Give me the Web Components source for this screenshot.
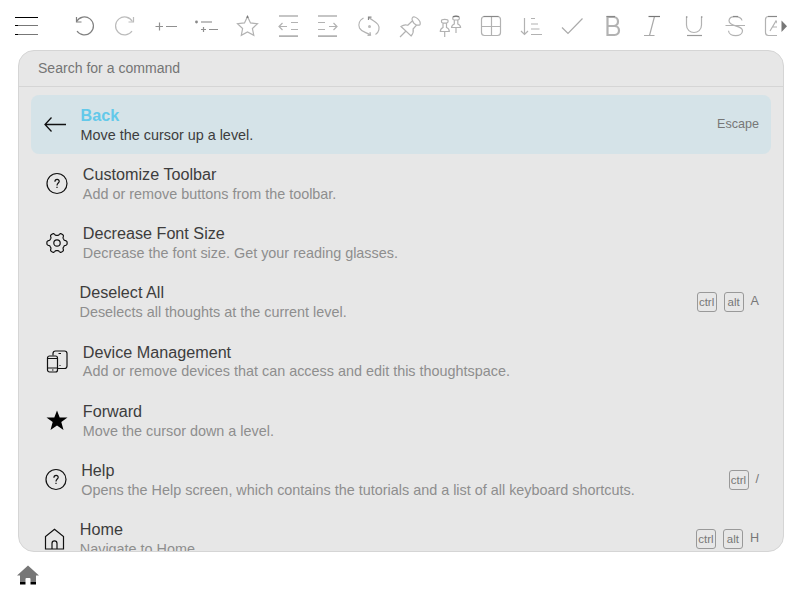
<!DOCTYPE html>
<html lang="en">
<head>
<meta charset="utf-8">
<title>Commands</title>
<style>
html,body{margin:0;height:100%;overflow:hidden;background:#fff}
body{font-family:"Liberation Sans",Arial,sans-serif}
</style>
</head>
<body>
<app-shell></app-shell>
<script>
const define = (name, html) => customElements.define(name, class extends HTMLElement {
  connectedCallback() {
    if (this.shadowRoot) return;
    const t = document.createElement('template');
    t.innerHTML = typeof html === 'function' ? html(this) : html;
    this.attachShadow({ mode: 'open' }).append(t.content.cloneNode(true));
  }
});

const toolIcons = {
  undo: '<g stroke="#808080"><path d="M12.6 15.5A9 9 0 1 1 13 25"/><path d="M12.500 11v5h5"/></g>',
  redo: '<g stroke="#bbb"><path d="M27.400 15.500A9 9 0 1 0 27 25"/><path d="M28.500 11v5h-5"/></g>',
  add: '<g stroke="#909090"><path d="M14.500 16.500v8M10.500 20.500h7.500M21 20.500h11"/></g>',
  sub: '<g stroke="#909090"><path stroke="#aaa" stroke-width="1.500" d="M15 16h11"/><path d="M17.500 21v5M15 23.500h5M23 23.500h9"/></g><circle cx="10.500" cy="16" r="1.400" fill="#888" stroke="none"/>',
  star: '<path d="M20.500 10.500l3 6.400 7 .8-5.100 4.800 1.400 6.800-6.300-3.300-6.200 3.300 1.300-6.800-5.100-4.800 7-.8z"/><path stroke="#777" d="M19.700 11.700l.8-1.300.8 1.300"/>',
  outdent: '<path stroke-width="1.700" d="M11 10h19M11 30.200h19"/><path d="M11 20.500h8M14.500 17l-3.500 3.500 3.500 3.500M23 16.500h7M23 23.500h7"/>',
  indent: '<path stroke-width="1.700" d="M11 10h19M11 30.200h19"/><path d="M30 20.500h-8M26.500 17l3.500 3.500-3.500 3.500M11 16.500h7M11 23.500h7"/>',
  swap: '<path d="M14.500 12c-4 2-5.500 6-4 10 2 4 6 4 11 7M18.500 29.300l3-.2-.5-3M26.500 28.500c3.500-2 4.600-7 2.500-10-2-3-5-3.500-9.500-7.200"/><path stroke="#888" d="M19.500 14v-2.800h3"/><circle cx="20.500" cy="20.400" r="1.500" fill="#bbb" stroke="none"/>',
  pin: '<path d="M22.500 11.500c2-2.500 9 3 7.500 7.200-1.500 1-2.500.3-3.500.3l-3.400 4c.6 2.700-.2 5-2 7L11 20.500c2-1.500 4.500-2 6.800-1.300l4.700-4.500c-.8-.9-.8-2 0-3.200zM22.500 14.700c.6 2 2 3.700 4 4.300M15.500 25.500L10 31"/>',
  pins: '<path d="M11.500 14.500c0-1.500 6.500-1.500 6.500 0v1.500c-.5.800-1 .8-1.500 1v4.500c2 .8 2.800 2 2.800 4h-9c0-2 1-3.200 2.700-4V17c-1-.2-1.500-.5-1.500-1zM13 17.200h3.500M14.700 25.500V31"/><path d="M22.800 11.500c0-1.500 6.500-1.500 6.500 0V13c-.5.800-1 .8-1.500 1v4c2 .8 2.800 1.700 2.800 3.500h-9c0-1.800 1-2.800 2.700-3.500v-4c-1-.2-1.500-.5-1.500-1zM24.300 14h3.500M26 21.500V27"/><path stroke="#777" d="M23 10.700c1-.8 5-.8 6 0"/>',
  table: '<rect x="10.500" y="10.500" width="19" height="19" rx="3"/><path d="M20.500 10.500v19M10.500 20.500h19"/><path stroke="#888" d="M12.500 10.500h15"/>',
  sort: '<path d="M13.500 12v16.500M10 25l3.500 3.500 3.500-3.500M20 12.500h4M20 18h7M20 23h8.500M20 28.500h11"/>',
  check: '<path stroke="#aaa" d="M10 21.500l6 6 14.500-15"/>',
  bold: '<path stroke-width="2.200" d="M14.500 11h6c6 0 6 9 0 9h-6zM14.500 20h7c6 0 6 9 0 9h-7z"/><path stroke="#888" d="M13.500 10.500H22"/>',
  italic: '<path stroke="#aaa" d="M12 29.500h10.500M22.500 10.500l-5 19"/><path stroke="#777" d="M16.500 10.500h11.500"/>',
  underline: '<path d="M12.500 10.500v8.500c0 10 15 10 15 0v-8.500"/><path stroke="#999" d="M13 29.500h15"/><path stroke="#888" d="M12 11h1.500M27 11h1.500"/>',
  strike: '<path d="M27 14.500c-1-5-12.500-5.500-13 0 0 3 2.500 4.300 6.500 5.300 4 1 7 2 7 5 0 6.500-13.500 6.500-14 0M10.500 19.500H30"/><path stroke="#888" d="M18 10.500h5"/>',
  color: '<rect x="9.500" y="10.500" width="20" height="19" rx="3"/><path d="M14 25l6-10 6 10M16.500 21h7"/><path stroke="#888" d="M12 10.500h16"/>'
};

define('tool-icon', el => `<style>
:host{display:block;width:40px;height:40px}svg{display:block;fill:none;stroke:#b2b2b2;stroke-width:1.200}
</style><svg width="40" height="40">${toolIcons[el.getAttribute('name')]}</svg>`);

define('menu-button', `<style>:host{display:block;width:64px;height:40px}svg{display:block}</style>
<svg width="64" height="40"><path d="M15 11h23v1H15zM15 19h3v1h-3zM15 28h3v1h-3z"/><path fill="#777" d="M18 19h20v1H18zM18 28h20v1H18z"/></svg>`);

define('tool-bar', `<style>
:host{display:flex;height:50px;padding-top:6px;box-sizing:border-box}
.tools{display:grid;flex:0 0 713px;width:713px;overflow:hidden;grid-template-columns:41px 40px 41px 41px 41px 39px 42px 41px 40px 41px 40px 41px 41px 39px 42px 41px 41px 41px}
.more{width:10px;height:40px;margin-left:4px}
</style><menu-button></menu-button><div class="tools">
${['undo','redo','add','sub','star','outdent','indent','swap','pin','pins','table','sort','check','bold','italic','underline','strike','color'].map(n => `<tool-icon name="${n}"></tool-icon>`).join('')}
</div><svg class="more"><path fill="#777" d="M.5 14.500l5.500 5.700L.5 26z"/></svg>`);

const help = '<circle cx="11" cy="11.500" r="10"/><path d="M8.900 9.800c0-3.300 4.600-3 4.300-.3-.2 1.600-2.200 1.700-2.200 4M11 14.700v1.200"/>';
const gear = (() => {
  let d = '';
  for (let i = 0; i <= 144; i++) {
    const a = i / 144 * Math.PI * 2;
    const r = 8.900 + 1.250 * Math.tanh(2.200 * Math.cos(6 * a));
    d += (i ? 'L' : 'M') + (11 + r * Math.cos(a)).toFixed(2) + ' ' + (12 + r * Math.sin(a)).toFixed(2);
  }
  return `<path d="${d}z"/><circle cx="11" cy="12" r="3.200"/>`;
})();
const rowIcons = {
  back: '<path stroke-width="1.300" d="M22 11.500H1M7.500 4.500l-6.500 7 6.500 7"/>',
  help, gear,
  devices: '<path d="M7 5.500V3.500q0-2.500 2.500-2.500h9q2.500 0 2.500 2.500v12.500q0 2.500-2.500 2.500H12M12.500 3.500h2.500M13.500 15.500h1"/><rect x="1.500" y="6" width="10" height="16" rx="2"/><path d="M1.500 8.500h10M1.500 18h10M6 20h1.500"/>',
  star: '<path fill="#000" stroke="none" d="M11 1.500l2.700 7.100h7.800l-6.200 4.500 2.200 7.900-6.500-4.600L4.500 21l2.200-7.900L.5 8.600h7.800z"/>',
  home: '<path d="M2.500 22V9.500L11.500 2.300 20.500 9.500v12.500zM9 22v-5.500c0-3.500 5-3.500 5 0v5.500"/>'
};

define('key-cap', `<style>
:host{display:block;box-sizing:border-box;width:20px;height:20px;border:1px solid #999;border-radius:3px;font-size:11.500px;line-height:19px;text-align:center;white-space:nowrap}
</style><slot></slot>`);

define('command-row', el => {
  const icon = el.getAttribute('icon');
  return `<style>
:host{display:flex;align-items:center;box-sizing:border-box;height:59.200px;padding:0 12px 0 var(--lead,15px);border-radius:8px;color:#3d3d3d}
:host([active]){background:#d5e3e8}
.icon{flex:none;width:22px;height:23px;margin-right:14.500px;fill:none;stroke:#111;stroke-width:1.200}
.text{flex:1;padding-top:.850px;white-space:nowrap}
.title{font-size:16.180px;line-height:19.900px}
.desc{font-size:14.400px;line-height:18.500px;color:#8e8e8e}
:host([active]) .title{color:#63c9ea;font-weight:bold}
:host([active]) .desc{color:#3d3d3d}
.keys{display:flex;align-items:center;color:#777;font-size:12.600px}
</style><svg class="icon">${icon ? rowIcons[icon] : ''}</svg>
<div class="text"><div class="title"><slot name="title"></slot></div><div class="desc"><slot></slot></div></div>
<div class="keys"><slot name="keys"></slot></div>`;
});

const row = (icon, lead, title, desc, keys = '', active = '') =>
  `<command-row ${active} icon="${icon}" style="--lead:${lead}px"><span slot="title">${title}</span>${desc}${keys ? `<div class="k" slot="keys">${keys}</div>` : ''}</command-row>`;

define('command-palette', `<style>
:host{display:flex;flex-direction:column;box-sizing:border-box;width:766px;height:502px;margin-left:18px;border:1px solid #d5d5d5;border-radius:16px;background:#e7e7e7;overflow:hidden}
.search{flex:none;box-sizing:border-box;height:36px;padding-left:19px;border-bottom:1px solid #d5d5d5;color:#757575;font-size:14.060px;line-height:34px}
.list{display:flex;flex-direction:column;flex:1;min-height:0;overflow:hidden;padding:8px 12px 0}
command-row{flex:none}
.k{display:flex;gap:7px;align-items:center}
.k span{padding-bottom:2px}
</style><div class="search">Search for a command</div><div class="list">
${row('back', 13, 'Back', 'Move the cursor up a level.', '<span>Escape</span>', 'active')}
${row('help', 15.300, 'Customize Toolbar', 'Add or remove buttons from the toolbar.')}
${row('gear', 15.300, 'Decrease Font Size', 'Decrease the font size. Get your reading glasses.')}
${row('', 12, 'Deselect All', 'Deselects all thoughts at the current level.', '<key-cap>ctrl</key-cap><key-cap>alt</key-cap><span>A</span>')}
${row('devices', 15.300, 'Device Management', 'Add or remove devices that can access and edit this thoughtspace.')}
${row('star', 15.300, 'Forward', 'Move the cursor down a level.')}
${row('help', 13.700, 'Help', 'Opens the Help screen, which contains the tutorials and a list of all keyboard shortcuts.', '<key-cap>ctrl</key-cap><span>/</span>')}
${row('home', 12.300, 'Home', 'Navigate to Home.', '<key-cap>ctrl</key-cap><key-cap>alt</key-cap><span>H</span>')}
</div>`);

define('home-link', `<style>:host{display:block;padding:13px 0 0 17px}svg{display:block}</style>
<svg width="23" height="20"><path fill="#777" d="M11 .5L22 10.500h-3V17H3v-6.500H0z"/><path d="M3 17h16v2.500H3z"/><path fill="#fff" d="M8.500 20v-6q0-1 1-1h3q1 0 1 1v6z"/></svg>`);

define('app-shell', `<style>:host{display:flex;flex-direction:column;width:800px;height:600px}</style>
<tool-bar></tool-bar><command-palette></command-palette><home-link></home-link>`);
</script>
</body>
</html>
